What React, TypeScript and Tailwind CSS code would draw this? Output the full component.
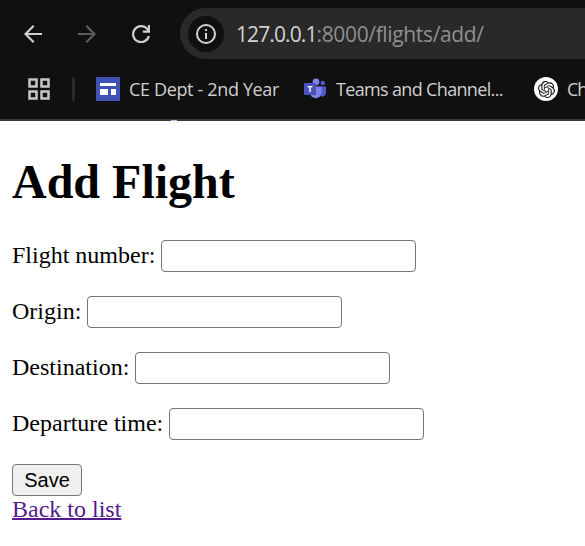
import React from "react";
import { SiOpenai } from "react-icons/si";

const uiFont = "font-['Open_Sans','Noto_Sans',sans-serif]";

function Field({ label, id }: { label: string; id: string }) {
  return (
    <div className="mb-6 flex h-8 items-start">
      <label htmlFor={id} className="mr-1.5 whitespace-nowrap text-2xl leading-[30px]">
        {label}
      </label>
      <input id={id} className="h-8 w-[255px] rounded-[4px] border border-[#767676] bg-white px-1 outline-none" />
    </div>
  );
}

function NavBar() {
  return (
    <div className="flex h-[59px] pt-2">
      <div className="flex h-[51px] w-[180px] shrink-0 items-center pl-6">
        <svg width="18" height="18" viewBox="0 0 18 18" fill="none" stroke="#cfcfcf" strokeWidth="2.2">
          <path d="M18 9H1.5M9.7 .8L1.5 9l8.2 8.2" />
        </svg>
        <svg className="ml-9" width="18" height="18" viewBox="0 0 18 18" fill="none" stroke="#5d5d5d" strokeWidth="2.2">
          <path d="M0 9h16.5M8.3 .8L16.5 9l-8.2 8.2" />
        </svg>
        <svg className="ml-9" width="18" height="18" viewBox="0 0 18 18" fill="none" stroke="#cfcfcf" strokeWidth="2.2">
          <path d="M16.9 11A8 8 0 1 1 15.2 3.9L17 5.8M17 0v6.7h-6.2" />
        </svg>
      </div>
      <div className="flex h-[51px] grow items-center rounded-l-full bg-[#292929] pl-2">
        <div className="flex size-9 shrink-0 items-center justify-center rounded-full bg-[#101010]">
          <svg width="20" height="20" viewBox="0 0 20 20">
            <circle cx="10" cy="10" r="9" fill="none" stroke="#d3d3d3" strokeWidth="2" />
            <path d="M9 9h2v6H9zM9 5h2v2H9z" fill="#d3d3d3" />
          </svg>
        </div>
        <div className="ml-3 whitespace-nowrap text-[21px] leading-7 tracking-[-0.35px] text-[#8f8f8f]">
          <span className="tracking-[-0.9px] text-[#d3d3d3]">127.0.0.1</span>:8000/flights/add/
        </div>
      </div>
    </div>
  );
}

function Bookmarks() {
  return (
    <div className="flex h-[60px] items-center overflow-hidden pl-7 text-[18px] text-[#cfcfcf]">
      <svg className="shrink-0" width="22" height="22" viewBox="0 0 22 22" fill="none" stroke="#c6c6c6" strokeWidth="2.5">
        <path d="M1.5 1.5h7v7h-7zM13.5 1.5h7v7h-7zM1.5 13.5h7v7h-7zM13.5 13.5h7v7h-7z" />
      </svg>
      <div className="ml-[22px] h-6 w-[3px] shrink-0 rounded-sm bg-[#292929]" />
      <svg className="ml-[21px] shrink-0" width="24" height="24" viewBox="0 0 24 24">
        <path fill="#3f51b5" d="M0 0h24v24H0z" />
        <path fill="#fff" d="M4 6h16v3H4zM4 12h8v6H4zM15 12h5v6h-5z" />
      </svg>
      <span className="ml-[9px] w-[151px] shrink-0 whitespace-nowrap tracking-[-0.35px]">CE Dept - 2nd Year</span>
      <svg className="ml-6 shrink-0" width="22" height="22" viewBox="0 0 22 22">
        <circle cx="18.8" cy="5" r="2.3" fill="#4f58c8" />
        <path fill="#505ac9" d="M15 8.5h7v6a4 4 0 0 1-5 4z" />
        <circle cx="12" cy="4" r="3.4" fill="#7b83eb" />
        <path fill="#7b83eb" d="M6 8.5h11.5v6a5.7 5.7 0 0 1-11.5 0z" />
        <rect y="5" width="12" height="12" rx="1" fill="#4b53bc" />
        <text x="6" y="14" textAnchor="middle" fill="#fff" fontSize="8.5" fontWeight="700" fontFamily="Open Sans">T</text>
      </svg>
      <span className="ml-[10px] w-[168px] shrink-0 whitespace-nowrap tracking-[-0.66px]">Teams and Channel...</span>
      <div className="ml-[30px] flex size-6 shrink-0 items-center justify-center rounded-full bg-white">
        <SiOpenai size={17} color="#171717" />
      </div>
      <span className="ml-[9px] shrink-0 whitespace-nowrap tracking-[-1px]">Ch</span>
    </div>
  );
}

export default function App() {
  return (
    <div className="h-[546px] w-[585px] overflow-hidden bg-white text-black">
      <header className={`h-[121px] bg-[#101010] ${uiFont}`}>
        <NavBar />
        <Bookmarks />
        <div className="flex h-0.5 items-end bg-[#3b3b3b] pl-[171px]">
          <div className="h-px w-1.5 bg-[#a8c7fa]" />
        </div>
      </header>
      <main className="px-3 pt-[33px] font-['Liberation_Serif',serif]">
        <h1 className="mb-[30px] text-[48px] font-bold leading-[56px]">Add Flight</h1>
        <form onSubmit={(event) => event.preventDefault()}>
          <Field id="number" label="Flight number:" />
          <Field id="origin" label="Origin:" />
          <Field id="destination" label="Destination:" />
          <Field id="departure" label="Departure time:" />
          <button className="block h-8 w-[70px] rounded-[4px] border border-[#767676] bg-[#efefef] font-['Liberation_Sans',sans-serif] text-[20px] leading-[30px]">
            Save
          </button>
        </form>
        <a href="#" className="block w-fit text-2xl leading-[26px] text-[#551a8b] underline decoration-2">Back to list</a>
      </main>
    </div>
  );
}
